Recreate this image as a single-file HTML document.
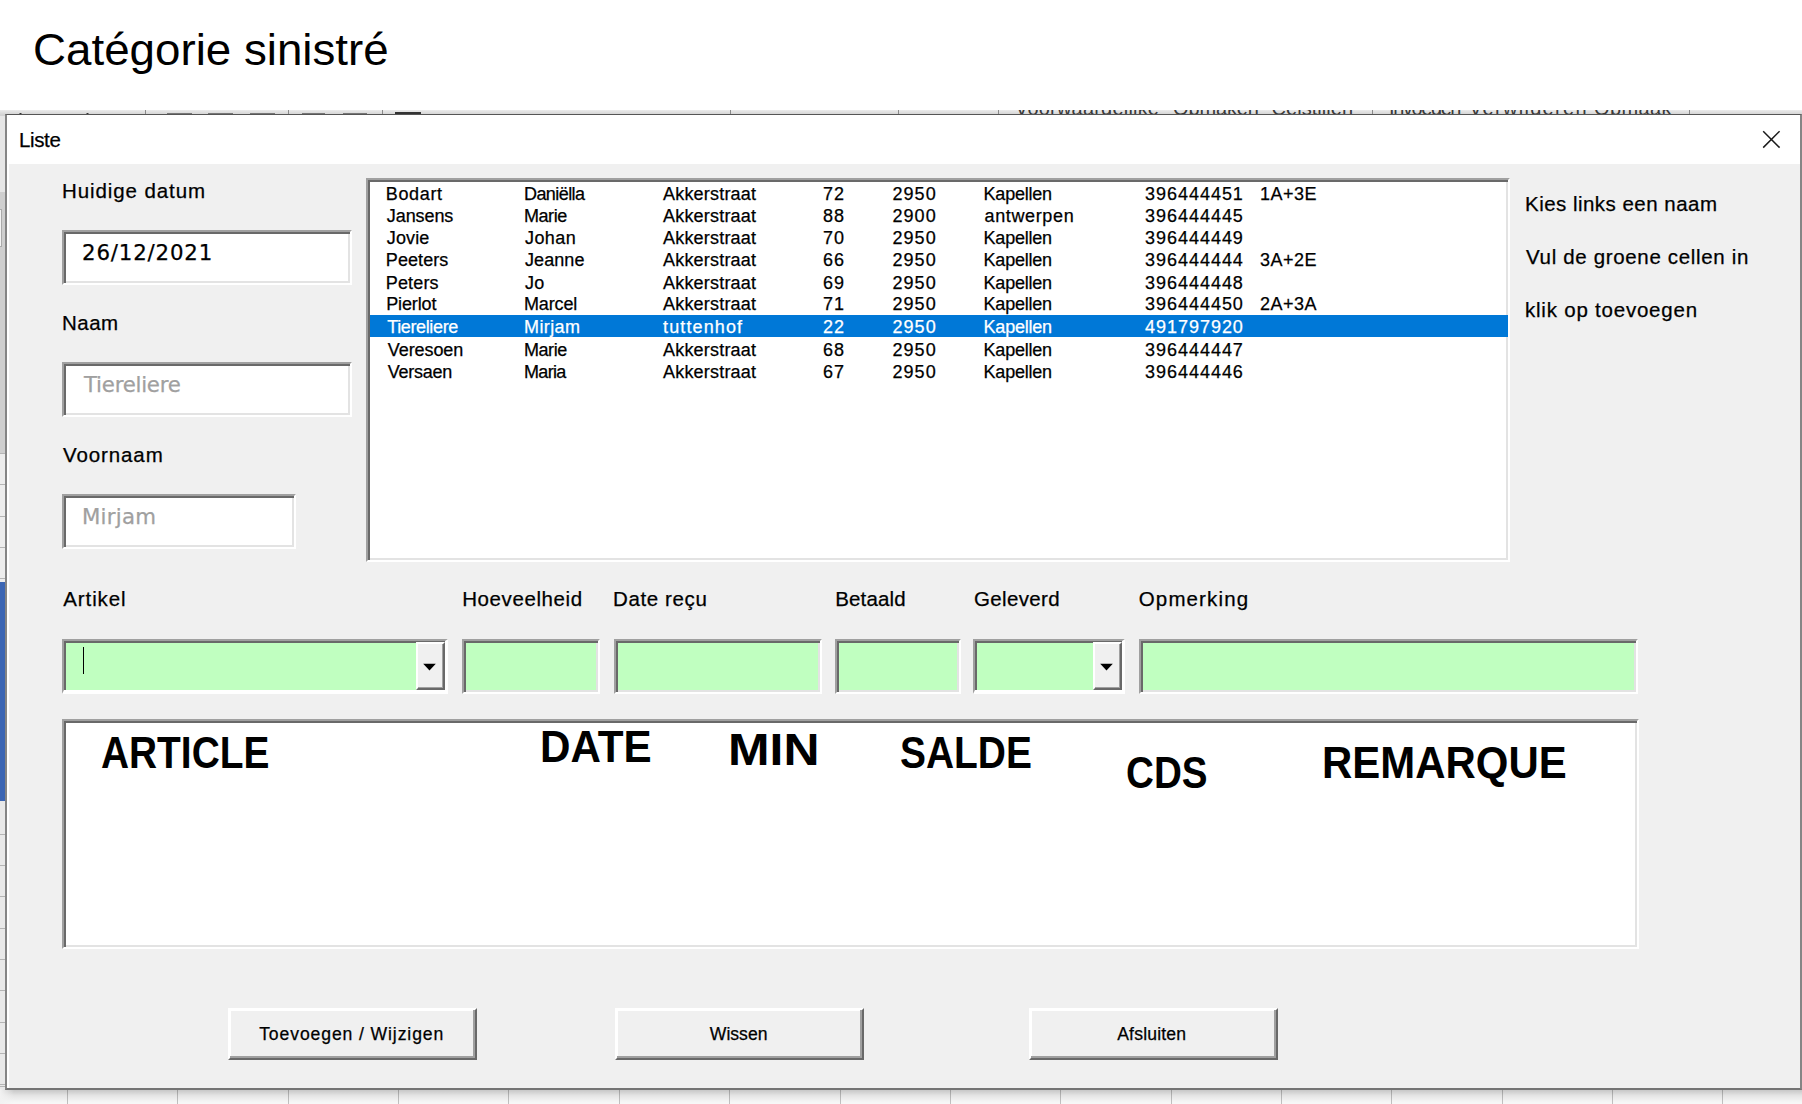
<!DOCTYPE html>
<html lang="nl"><head><meta charset="utf-8"><title>Liste</title>
<style>
html,body{margin:0;padding:0;background:#fff;}
body{width:1802px;height:1104px;position:relative;overflow:hidden;font-family:"Liberation Sans",sans-serif;}
div{box-sizing:border-box;}
.a{position:absolute;}
.t{position:absolute;white-space:nowrap;line-height:1;transform-origin:0 50%;-webkit-text-stroke:0.25px currentColor;}
#title,.hb{-webkit-text-stroke:0;}
.dj{font-family:"DejaVu Sans","Liberation Sans",sans-serif;}
.rb{font-size:20px;color:#3a3a3a;-webkit-text-stroke:0;}
.sunk{position:absolute;border-style:solid;border-width:2px;border-color:#a0a0a0 #fff #fff #a0a0a0;box-shadow:inset 2px 2px 0 #696969, inset -2px -2px 0 #e3e3e3;}
.cmb{box-shadow:inset 2px 2px 0 #696969;border-right-width:3px;border-bottom-width:4px;}
.cbtn{position:absolute;background:#f0f0f0;border-style:solid;border-width:2px;border-color:#fff #696969 #696969 #fff;box-shadow:inset -1px -1px 0 #a0a0a0, inset 1px 1px 0 #f0f0f0;}
.btn{position:absolute;background:#f0f0f0;border-style:solid;border-width:2px;border-color:#fff #696969 #696969 #fff;box-shadow:inset -2px -2px 0 #a0a0a0, inset 1px 1px 0 #fff;}
</style></head><body>

<div class="a" style="left:0;top:110px;width:1802px;height:994px;background:#e6e6e6"></div>
<div class="a" style="left:0;top:110px;width:1802px;height:6px;background:linear-gradient(#ebebeb,#d2d2d2 80%);overflow:hidden"><div class="t rb" style="left:1015px;top:-12.4px;letter-spacing:0.20px">Voorwaardelijke</div><div class="t rb" style="left:1173px;top:-12.4px;letter-spacing:-0.12px">Opmaken</div><div class="t rb" style="left:1271.5px;top:-12.4px;letter-spacing:0.04px">Celstijlen</div><div class="t rb" style="left:1389px;top:-12.4px;letter-spacing:-1.40px">Invoegen</div><div class="t rb" style="left:1469px;top:-12.4px;letter-spacing:1.30px">Verwijderen</div><div class="t rb" style="left:1594px;top:-12.4px;letter-spacing:0.38px">Opmaak</div><div class="a" style="left:145px;top:0;width:1px;height:6px;background:#8a8a8a"></div><div class="a" style="left:288px;top:0;width:1px;height:6px;background:#8a8a8a"></div><div class="a" style="left:382px;top:0;width:1px;height:6px;background:#8a8a8a"></div><div class="a" style="left:730px;top:0;width:1px;height:6px;background:#8a8a8a"></div><div class="a" style="left:898px;top:0;width:1px;height:6px;background:#8a8a8a"></div><div class="a" style="left:997.5px;top:0;width:1px;height:6px;background:#8a8a8a"></div><div class="a" style="left:1371.5px;top:0;width:1px;height:6px;background:#8a8a8a"></div><div class="a" style="left:1689px;top:0;width:1px;height:6px;background:#8a8a8a"></div><div class="a" style="left:167px;top:3px;width:25px;height:1px;background:#777"></div><div class="a" style="left:208px;top:3px;width:25px;height:1px;background:#777"></div><div class="a" style="left:250px;top:3px;width:25px;height:1px;background:#777"></div><div class="a" style="left:302px;top:3px;width:23px;height:1px;background:#777"></div><div class="a" style="left:343px;top:3px;width:24px;height:1px;background:#777"></div><div class="a" style="left:395px;top:2px;width:26px;height:2px;background:#333"></div><div class="a" style="left:19px;top:3px;width:3px;height:2px;border-radius:2px 2px 0 0;background:#222"></div><div class="a" style="left:86px;top:3px;width:3px;height:2px;border-radius:2px 2px 0 0;background:#222"></div></div>
<div class="a" style="left:0;top:192px;width:6px;height:261px;background:#cfcfcf"></div>
<div class="a" style="left:0;top:209px;width:2px;height:38px;background:#f4f4f4;border:1px solid #aaa;border-left:0"></div>
<div class="a" style="left:0;top:453px;width:6px;height:129px;background:#ededed"></div>
<div class="a" style="left:0;top:453.0px;width:6px;height:1px;background:#b5b5b5"></div>
<div class="a" style="left:0;top:484.3px;width:6px;height:1px;background:#b5b5b5"></div>
<div class="a" style="left:0;top:515.6px;width:6px;height:1px;background:#b5b5b5"></div>
<div class="a" style="left:0;top:546.9px;width:6px;height:1px;background:#b5b5b5"></div>
<div class="a" style="left:0;top:578.2px;width:6px;height:1px;background:#b5b5b5"></div>
<div class="a" style="left:0;top:582px;width:6px;height:219px;background:#3c66b4"></div>
<div class="a" style="left:0;top:801px;width:6px;height:303px;background:#e9e9e9"></div>
<div class="a" style="left:0;top:833.7px;width:6px;height:1px;background:#b5b5b5"></div>
<div class="a" style="left:0;top:865.0px;width:6px;height:1px;background:#b5b5b5"></div>
<div class="a" style="left:0;top:896.3px;width:6px;height:1px;background:#b5b5b5"></div>
<div class="a" style="left:0;top:927.6px;width:6px;height:1px;background:#b5b5b5"></div>
<div class="a" style="left:0;top:958.9px;width:6px;height:1px;background:#b5b5b5"></div>
<div class="a" style="left:0;top:990.2px;width:6px;height:1px;background:#b5b5b5"></div>
<div class="a" style="left:0;top:1021.5px;width:6px;height:1px;background:#b5b5b5"></div>
<div class="a" style="left:0;top:1052.8px;width:6px;height:1px;background:#b5b5b5"></div>
<div class="a" style="left:0;top:1084.1px;width:6px;height:1px;background:#b5b5b5"></div>
<div class="a" style="left:0;top:1089px;width:1802px;height:15px;background:#fff"></div>
<div class="a" style="left:67.0px;top:1089px;width:1px;height:15px;background:#c6c6c6"></div>
<div class="a" style="left:177.4px;top:1089px;width:1px;height:15px;background:#c6c6c6"></div>
<div class="a" style="left:287.7px;top:1089px;width:1px;height:15px;background:#c6c6c6"></div>
<div class="a" style="left:398.1px;top:1089px;width:1px;height:15px;background:#c6c6c6"></div>
<div class="a" style="left:508.4px;top:1089px;width:1px;height:15px;background:#c6c6c6"></div>
<div class="a" style="left:618.8px;top:1089px;width:1px;height:15px;background:#c6c6c6"></div>
<div class="a" style="left:729.2px;top:1089px;width:1px;height:15px;background:#c6c6c6"></div>
<div class="a" style="left:839.5px;top:1089px;width:1px;height:15px;background:#c6c6c6"></div>
<div class="a" style="left:949.9px;top:1089px;width:1px;height:15px;background:#c6c6c6"></div>
<div class="a" style="left:1060.2px;top:1089px;width:1px;height:15px;background:#c6c6c6"></div>
<div class="a" style="left:1170.6px;top:1089px;width:1px;height:15px;background:#c6c6c6"></div>
<div class="a" style="left:1281.0px;top:1089px;width:1px;height:15px;background:#c6c6c6"></div>
<div class="a" style="left:1391.3px;top:1089px;width:1px;height:15px;background:#c6c6c6"></div>
<div class="a" style="left:1501.7px;top:1089px;width:1px;height:15px;background:#c6c6c6"></div>
<div class="a" style="left:1612.0px;top:1089px;width:1px;height:15px;background:#c6c6c6"></div>
<div class="a" style="left:1722.4px;top:1089px;width:1px;height:15px;background:#c6c6c6"></div>
<div class="a" style="left:1832.8px;top:1089px;width:1px;height:15px;background:#c6c6c6"></div>
<div class="a" style="left:0;top:1089px;width:1802px;height:15px;background:linear-gradient(rgba(0,0,0,.24),rgba(0,0,0,.10) 45%,rgba(0,0,0,.04) 85%,rgba(0,0,0,.03))"></div>
<div class="a" style="left:0;top:1089px;width:14px;height:15px;background:linear-gradient(to right,#f2f2f2,rgba(242,242,242,0))"></div>
<div class="a" style="left:0;top:1086px;width:6px;height:1px;background:#b5b5b5"></div>
<div class="a" id="dlg" style="left:5px;top:114px;width:1797px;height:976px;background:#f0f0f0;border:2px solid #858585;border-top:1px solid #555;border-bottom:2px solid #747474;box-shadow:inset 2px 0 0 #fff"></div>
<div class="a" style="left:7px;top:115px;width:1793px;height:49px;background:#fff"></div>
<svg class="a" style="left:1758px;top:126px" width="28" height="28"><path d="M5.2 5.2 L21.6 21.6 M21.6 5.2 L5.2 21.6" stroke="#1a1a1a" stroke-width="1.5" fill="none"/></svg>
<div class="sunk" style="left:62px;top:230px;width:290px;height:55px;background:#fff"></div>
<div class="sunk" style="left:62px;top:362px;width:290px;height:55px;background:#fff"></div>
<div class="sunk" style="left:62px;top:494px;width:234px;height:55px;background:#fff"></div>
<div class="sunk" style="left:366px;top:178px;width:1144px;height:384px;background:#fff"></div>
<div class="a" style="left:370px;top:315px;width:1138px;height:22px;background:#0078d7"></div>
<div class="sunk cmb" style="left:62px;top:639px;width:386px;height:55px;background:#c0ffc0"></div>
<div class="cbtn" style="left:416px;top:642px;width:29px;height:48px"><svg width="29" height="48" style="position:absolute;left:-3px;top:-2px"><path d="M8.2 21.8 h12.6 l-6.3 6.8z" fill="#000"/></svg></div>
<div class="a" style="left:83px;top:647px;width:1px;height:27px;background:#000"></div>
<div class="sunk" style="left:462px;top:639px;width:138px;height:55px;background:#c0ffc0"></div>
<div class="sunk" style="left:614px;top:639px;width:208px;height:55px;background:#c0ffc0"></div>
<div class="sunk" style="left:835px;top:639px;width:126px;height:55px;background:#c0ffc0"></div>
<div class="sunk cmb" style="left:973px;top:639px;width:152px;height:55px;background:#c0ffc0"></div>
<div class="cbtn" style="left:1093px;top:642px;width:29px;height:48px"><svg width="29" height="48" style="position:absolute;left:-3px;top:-2px"><path d="M8.2 21.8 h12.6 l-6.3 6.8z" fill="#000"/></svg></div>
<div class="sunk" style="left:1139px;top:639px;width:499px;height:55px;background:#c0ffc0"></div>
<div class="sunk" style="left:62px;top:719px;width:1577px;height:230px;background:#fff"></div>
<div class="btn" style="left:228px;top:1008px;width:249px;height:52px"></div>
<div class="btn" style="left:614.5px;top:1008px;width:249px;height:52px"></div>
<div class="btn" style="left:1028.5px;top:1008px;width:249px;height:52px"></div>
<div class="t" id="title" style="left:33.00px;top:26.91px;font-size:45px;color:#000;transform:scaleX(1.0159);">Catégorie sinistré</div>
<div class="t" id="liste" style="left:19.00px;top:130.15px;font-size:20.5px;color:#000;letter-spacing:-0.375px;">Liste</div>
<div class="t" id="l_hd" style="left:62.00px;top:180.65px;font-size:20.5px;color:#000;letter-spacing:0.907px;">Huidige datum</div>
<div class="t" id="l_naam" style="left:62.00px;top:312.65px;font-size:20.5px;color:#000;letter-spacing:0.500px;">Naam</div>
<div class="t" id="l_vn" style="left:63.00px;top:444.65px;font-size:20.5px;color:#000;letter-spacing:0.899px;">Voornaam</div>
<div class="t dj" id="v_date" style="left:82.00px;top:241.97px;font-size:21.3px;color:#000;letter-spacing:0.833px;">26/12/2021</div>
<div class="t dj" id="v_naam" style="left:84.00px;top:373.72px;font-size:21.3px;color:#a0a0a0;letter-spacing:-0.248px;">Tiereliere</div>
<div class="t dj" id="v_vn" style="left:82.00px;top:505.72px;font-size:21.3px;color:#a0a0a0;letter-spacing:0.250px;">Mirjam</div>
<div class="t" id="r1" style="left:1525.00px;top:194.15px;font-size:20.5px;color:#000;letter-spacing:0.472px;">Kies links een naam</div>
<div class="t" id="r2" style="left:1526.00px;top:247.05px;font-size:20.5px;color:#000;letter-spacing:0.660px;">Vul de groene cellen in</div>
<div class="t" id="r3" style="left:1525.00px;top:299.85px;font-size:20.5px;color:#000;letter-spacing:0.782px;">klik op toevoegen</div>
<div class="t" id="l_art" style="left:63.20px;top:589.35px;font-size:20.5px;color:#000;letter-spacing:0.915px;">Artikel</div>
<div class="t" id="l_hoe" style="left:462.20px;top:589.35px;font-size:20.5px;color:#000;letter-spacing:0.600px;">Hoeveelheid</div>
<div class="t" id="l_dr" style="left:613.00px;top:589.35px;font-size:20.5px;color:#000;letter-spacing:0.625px;">Date reçu</div>
<div class="t" id="l_bet" style="left:835.20px;top:589.35px;font-size:20.5px;color:#000;letter-spacing:0.167px;">Betaald</div>
<div class="t" id="l_gel" style="left:974.00px;top:589.35px;font-size:20.5px;color:#000;letter-spacing:0.360px;">Geleverd</div>
<div class="t" id="l_opm" style="left:1138.80px;top:589.35px;font-size:20.5px;color:#000;letter-spacing:1.125px;">Opmerking</div>
<div class="t" id="b1" style="left:259.20px;top:1025.90px;font-size:17.6px;color:#000;letter-spacing:0.886px;">Toevoegen / Wijzigen</div>
<div class="t" id="b2" style="left:709.80px;top:1025.90px;font-size:17.6px;color:#000;">Wissen</div>
<div class="t" id="b3" style="left:1117.20px;top:1025.90px;font-size:17.6px;color:#000;letter-spacing:0.175px;">Afsluiten</div>
<div class="t hb" id="h_art" style="left:101.00px;top:731.68px;font-size:43.5px;color:#000;font-weight:bold;transform:scaleX(0.8933);">ARTICLE</div>
<div class="t hb" id="h_date" style="left:540.00px;top:725.68px;font-size:43.5px;color:#000;font-weight:bold;transform:scaleX(0.9700);">DATE</div>
<div class="t hb" id="h_min" style="left:728.00px;top:729.18px;font-size:43.5px;color:#000;font-weight:bold;transform:scaleX(1.1467);">MIN</div>
<div class="t hb" id="h_sal" style="left:900.00px;top:732.18px;font-size:43.5px;color:#000;font-weight:bold;transform:scaleX(0.8949);">SALDE</div>
<div class="t hb" id="h_cds" style="left:1126.00px;top:752.18px;font-size:43.5px;color:#000;font-weight:bold;transform:scaleX(0.8878);">CDS</div>
<div class="t hb" id="h_rem" style="left:1322.00px;top:741.68px;font-size:43.5px;color:#000;font-weight:bold;transform:scaleX(0.9641);">REMARQUE</div>
<div class="t" id="c0_0" style="left:385.80px;top:184.51px;font-size:18px;color:#000;letter-spacing:0.640px;">Bodart</div>
<div class="t" id="c0_1" style="left:524.00px;top:184.51px;font-size:18px;color:#000;letter-spacing:-0.571px;">Daniëlla</div>
<div class="t" id="c0_2" style="left:663.00px;top:184.51px;font-size:18px;color:#000;letter-spacing:0.200px;">Akkerstraat</div>
<div class="t" id="c0_3" style="left:823.00px;top:184.51px;font-size:18px;color:#000;letter-spacing:1.000px;">72</div>
<div class="t" id="c0_4" style="left:892.40px;top:184.51px;font-size:18px;color:#000;letter-spacing:1.102px;">2950</div>
<div class="t" id="c0_5" style="left:983.60px;top:184.51px;font-size:18px;color:#000;letter-spacing:-0.233px;">Kapellen</div>
<div class="t" id="c0_6" style="left:1145.00px;top:184.51px;font-size:18px;color:#000;letter-spacing:0.973px;">396444451</div>
<div class="t" id="c0_7" style="left:1260.00px;top:184.51px;font-size:18px;color:#000;letter-spacing:0.475px;">1A+3E</div>
<div class="t" id="c1_0" style="left:386.80px;top:206.81px;font-size:18px;color:#000;letter-spacing:-0.083px;">Jansens</div>
<div class="t" id="c1_1" style="left:524.00px;top:206.81px;font-size:18px;color:#000;letter-spacing:-0.448px;">Marie</div>
<div class="t" id="c1_2" style="left:663.00px;top:206.81px;font-size:18px;color:#000;letter-spacing:0.200px;">Akkerstraat</div>
<div class="t" id="c1_3" style="left:823.00px;top:206.81px;font-size:18px;color:#000;letter-spacing:1.000px;">88</div>
<div class="t" id="c1_4" style="left:892.40px;top:206.81px;font-size:18px;color:#000;letter-spacing:1.102px;">2900</div>
<div class="t" id="c1_5" style="left:984.60px;top:206.81px;font-size:18px;color:#000;letter-spacing:0.625px;">antwerpen</div>
<div class="t" id="c1_6" style="left:1145.00px;top:206.81px;font-size:18px;color:#000;letter-spacing:0.973px;">396444445</div>
<div class="t" id="c2_0" style="left:386.80px;top:229.11px;font-size:18px;color:#000;letter-spacing:0.125px;">Jovie</div>
<div class="t" id="c2_1" style="left:525.00px;top:229.11px;font-size:18px;color:#000;letter-spacing:0.400px;">Johan</div>
<div class="t" id="c2_2" style="left:663.00px;top:229.11px;font-size:18px;color:#000;letter-spacing:0.200px;">Akkerstraat</div>
<div class="t" id="c2_3" style="left:823.00px;top:229.11px;font-size:18px;color:#000;letter-spacing:1.000px;">70</div>
<div class="t" id="c2_4" style="left:892.40px;top:229.11px;font-size:18px;color:#000;letter-spacing:1.102px;">2950</div>
<div class="t" id="c2_5" style="left:983.60px;top:229.11px;font-size:18px;color:#000;letter-spacing:-0.233px;">Kapellen</div>
<div class="t" id="c2_6" style="left:1145.00px;top:229.11px;font-size:18px;color:#000;letter-spacing:0.973px;">396444449</div>
<div class="t" id="c3_0" style="left:385.80px;top:251.41px;font-size:18px;color:#000;letter-spacing:0.083px;">Peeters</div>
<div class="t" id="c3_1" style="left:525.00px;top:251.41px;font-size:18px;color:#000;letter-spacing:0.070px;">Jeanne</div>
<div class="t" id="c3_2" style="left:663.00px;top:251.41px;font-size:18px;color:#000;letter-spacing:0.200px;">Akkerstraat</div>
<div class="t" id="c3_3" style="left:823.00px;top:251.41px;font-size:18px;color:#000;letter-spacing:1.000px;">66</div>
<div class="t" id="c3_4" style="left:892.40px;top:251.41px;font-size:18px;color:#000;letter-spacing:1.102px;">2950</div>
<div class="t" id="c3_5" style="left:983.60px;top:251.41px;font-size:18px;color:#000;letter-spacing:-0.233px;">Kapellen</div>
<div class="t" id="c3_6" style="left:1145.00px;top:251.41px;font-size:18px;color:#000;letter-spacing:0.973px;">396444444</div>
<div class="t" id="c3_7" style="left:1260.00px;top:251.41px;font-size:18px;color:#000;letter-spacing:0.475px;">3A+2E</div>
<div class="t" id="c4_0" style="left:385.80px;top:273.71px;font-size:18px;color:#000;letter-spacing:0.150px;">Peters</div>
<div class="t" id="c4_1" style="left:525.00px;top:273.71px;font-size:18px;color:#000;letter-spacing:0.350px;">Jo</div>
<div class="t" id="c4_2" style="left:663.00px;top:273.71px;font-size:18px;color:#000;letter-spacing:0.200px;">Akkerstraat</div>
<div class="t" id="c4_3" style="left:823.00px;top:273.71px;font-size:18px;color:#000;letter-spacing:1.000px;">69</div>
<div class="t" id="c4_4" style="left:892.40px;top:273.71px;font-size:18px;color:#000;letter-spacing:1.102px;">2950</div>
<div class="t" id="c4_5" style="left:983.60px;top:273.71px;font-size:18px;color:#000;letter-spacing:-0.233px;">Kapellen</div>
<div class="t" id="c4_6" style="left:1145.00px;top:273.71px;font-size:18px;color:#000;letter-spacing:0.973px;">396444448</div>
<div class="t" id="c5_0" style="left:386.20px;top:294.91px;font-size:18px;color:#000;letter-spacing:-0.120px;">Pierlot</div>
<div class="t" id="c5_1" style="left:524.00px;top:294.91px;font-size:18px;color:#000;letter-spacing:-0.150px;">Marcel</div>
<div class="t" id="c5_2" style="left:663.00px;top:294.91px;font-size:18px;color:#000;letter-spacing:0.200px;">Akkerstraat</div>
<div class="t" id="c5_3" style="left:823.00px;top:294.91px;font-size:18px;color:#000;letter-spacing:1.000px;">71</div>
<div class="t" id="c5_4" style="left:892.40px;top:294.91px;font-size:18px;color:#000;letter-spacing:1.102px;">2950</div>
<div class="t" id="c5_5" style="left:983.60px;top:294.91px;font-size:18px;color:#000;letter-spacing:-0.233px;">Kapellen</div>
<div class="t" id="c5_6" style="left:1145.00px;top:294.91px;font-size:18px;color:#000;letter-spacing:0.973px;">396444450</div>
<div class="t" id="c5_7" style="left:1260.00px;top:294.91px;font-size:18px;color:#000;letter-spacing:0.475px;">2A+3A</div>
<div class="t" id="c6_0" style="left:387.20px;top:318.31px;font-size:18px;color:#fff;letter-spacing:-0.362px;">Tiereliere</div>
<div class="t" id="c6_1" style="left:524.00px;top:318.31px;font-size:18px;color:#fff;letter-spacing:0.400px;">Mirjam</div>
<div class="t" id="c6_2" style="left:663.00px;top:318.31px;font-size:18px;color:#fff;letter-spacing:1.125px;">tuttenhof</div>
<div class="t" id="c6_3" style="left:823.00px;top:318.31px;font-size:18px;color:#fff;letter-spacing:1.000px;">22</div>
<div class="t" id="c6_4" style="left:892.40px;top:318.31px;font-size:18px;color:#fff;letter-spacing:1.102px;">2950</div>
<div class="t" id="c6_5" style="left:983.60px;top:318.31px;font-size:18px;color:#fff;letter-spacing:-0.233px;">Kapellen</div>
<div class="t" id="c6_6" style="left:1145.00px;top:318.31px;font-size:18px;color:#fff;letter-spacing:0.973px;">491797920</div>
<div class="t" id="c7_0" style="left:387.80px;top:340.61px;font-size:18px;color:#000;letter-spacing:-0.090px;">Veresoen</div>
<div class="t" id="c7_1" style="left:524.00px;top:340.61px;font-size:18px;color:#000;letter-spacing:-0.448px;">Marie</div>
<div class="t" id="c7_2" style="left:663.00px;top:340.61px;font-size:18px;color:#000;letter-spacing:0.200px;">Akkerstraat</div>
<div class="t" id="c7_3" style="left:823.00px;top:340.61px;font-size:18px;color:#000;letter-spacing:1.000px;">68</div>
<div class="t" id="c7_4" style="left:892.40px;top:340.61px;font-size:18px;color:#000;letter-spacing:1.102px;">2950</div>
<div class="t" id="c7_5" style="left:983.60px;top:340.61px;font-size:18px;color:#000;letter-spacing:-0.233px;">Kapellen</div>
<div class="t" id="c7_6" style="left:1145.00px;top:340.61px;font-size:18px;color:#000;letter-spacing:0.973px;">396444447</div>
<div class="t" id="c8_0" style="left:387.80px;top:362.91px;font-size:18px;color:#000;letter-spacing:-0.263px;">Versaen</div>
<div class="t" id="c8_1" style="left:524.00px;top:362.91px;font-size:18px;color:#000;letter-spacing:-0.675px;">Maria</div>
<div class="t" id="c8_2" style="left:663.00px;top:362.91px;font-size:18px;color:#000;letter-spacing:0.200px;">Akkerstraat</div>
<div class="t" id="c8_3" style="left:823.00px;top:362.91px;font-size:18px;color:#000;letter-spacing:1.000px;">67</div>
<div class="t" id="c8_4" style="left:892.40px;top:362.91px;font-size:18px;color:#000;letter-spacing:1.102px;">2950</div>
<div class="t" id="c8_5" style="left:983.60px;top:362.91px;font-size:18px;color:#000;letter-spacing:-0.233px;">Kapellen</div>
<div class="t" id="c8_6" style="left:1145.00px;top:362.91px;font-size:18px;color:#000;letter-spacing:0.973px;">396444446</div>
</body></html>
